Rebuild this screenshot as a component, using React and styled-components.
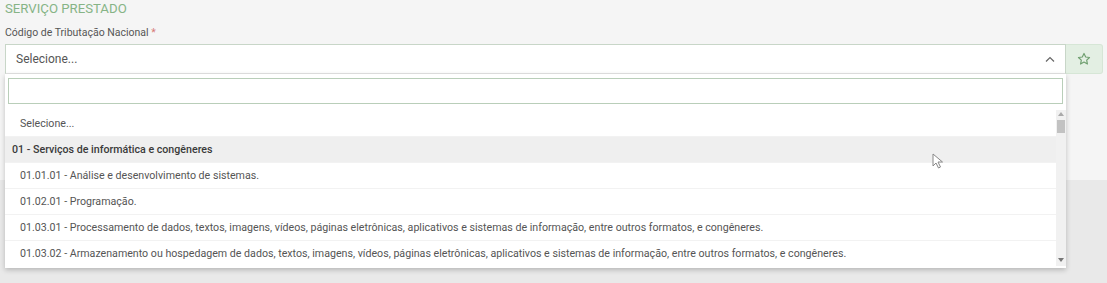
import React from "react"
import styled, { createGlobalStyle } from "styled-components"

const Global = createGlobalStyle`
  html, body {
    margin: 0;
    padding: 0;
    background: #e9e9e9;
    font-family: Roboto, "Liberation Sans", Arial, sans-serif;
  }
`

const Page = styled.div`
  position: relative;
  width: 1107px;
  height: 283px;
  overflow: hidden;
  background: #e9e9e9;
`

const Panel = styled.section`
  background: #f5f5f5;
  height: 180px;
  padding: 1px 4px 0 5px;
  box-sizing: border-box;
`

const Title = styled.h3`
  margin: 0;
  font-size: 13.2px;
  font-weight: 400;
  color: #86b486;
  line-height: 15px;
`

const Label = styled.label`
  display: block;
  margin-top: 10px;
  font-size: 10.5px;
  color: #555;
  line-height: 13px;

  span {
    color: #d77a78;
  }
`

const FieldRow = styled.div`
  display: flex;
  margin-top: 5px;
  position: relative;
`

const SelectBox = styled.div`
  flex: 1;
  height: 30px;
  box-sizing: border-box;
  background: #fff;
  border: 1px solid #c8d6c8;
  border-bottom-color: #e4e4e4;
  display: flex;
  align-items: center;
  justify-content: space-between;
  padding: 0 10px 0 10px;
  font-size: 12px;
  color: #555;
`

const StarButton = styled.button`
  width: 37px;
  height: 30px;
  border: 1px solid #d6e6d6;
  border-left: none;
  border-radius: 0 3px 3px 0;
  background: #e3efe3;
  display: flex;
  align-items: center;
  justify-content: center;
  padding: 0;
`

const Dropdown = styled.div`
  position: absolute;
  left: 0;
  top: 30px;
  width: 1061px;
  background: #fff;
  box-shadow: 0 2px 5px rgba(0, 0, 0, 0.22);
  padding: 4px 3px 2px 3px;
  box-sizing: border-box;
  z-index: 2;
`

const Search = styled.input`
  display: block;
  width: 100%;
  height: 26px;
  box-sizing: border-box;
  border: 1px solid #b9ceb9;
  outline: none;
  background: #fff;
`

const ListWrap = styled.div`
  display: flex;
  margin-top: 6px;
  margin-right: -3px;
  margin-left: -3px;
  height: 156px;
`

const List = styled.ul`
  flex: 1;
  margin: 0;
  padding: 0;
  list-style: none;
  overflow: hidden;
`

const Option = styled.li`
  height: 26px;
  display: flex;
  align-items: center;
  padding-left: ${p => (p.$group ? "7px" : "15px")};
  font-size: 10.65px;
  font-weight: ${p => (p.$group ? 500 : 400)};
  color: ${p => (p.$group ? "#3a3a3a" : "#555")};
  background: ${p => (p.$group ? "#efefef" : "#fff")};
  border-top: 1px solid ${p => (p.$plain ? "transparent" : "#f2f2f2")};
  box-sizing: border-box;
  white-space: nowrap;
`

const Scrollbar = styled.div`
  width: 10px;
  background: #f1f1f1;
  display: flex;
  flex-direction: column;
  align-items: center;
  justify-content: space-between;
  padding: 2px 0 4px;
  box-sizing: border-box;
  position: relative;
`

const Thumb = styled.div`
  position: absolute;
  top: 10px;
  left: 1px;
  width: 8px;
  height: 13px;
  background: #c2c2c2;
`

const Arrow = styled.div`
  width: 0;
  height: 0;
  border-left: 3px solid transparent;
  border-right: 3px solid transparent;
  ${p =>
    p.$down
      ? "border-top: 4px solid #777;"
      : "border-bottom: 4px solid #aaa;"}
`

const Cursor = styled.svg`
  position: absolute;
  left: 932px;
  top: 153px;
  z-index: 3;
`

const options = [
  { text: "Selecione...", plain: true },
  { text: "01 - Serviços de informática e congêneres", group: true },
  { text: "01.01.01 - Análise e desenvolvimento de sistemas." },
  { text: "01.02.01 - Programação." },
  { text: "01.03.01 - Processamento de dados, textos, imagens, vídeos, páginas eletrônicas, aplicativos e sistemas de informação, entre outros formatos, e congêneres." },
  { text: "01.03.02 - Armazenamento ou hospedagem de dados, textos, imagens, vídeos, páginas eletrônicas, aplicativos e sistemas de informação, entre outros formatos, e congêneres." },
]

export default function App() {
  return (
    <Page>
      <Global />
      <Panel>
        <Title>SERVIÇO PRESTADO</Title>
        <Label>Código de Tributação Nacional <span>*</span></Label>
        <FieldRow>
          <SelectBox>
            Selecione...
            <svg width="10" height="6" viewBox="0 0 10 6">
              <path d="M1 5.5 L5 1.5 L9 5.5" fill="none" stroke="#666" strokeWidth="1.2" />
            </svg>
          </SelectBox>
          <StarButton>
            <svg width="14" height="14" viewBox="0 0 24 24" fill="none" stroke="#6f9f6f" strokeWidth="2" strokeLinejoin="round">
              <path d="M12 2.5l2.9 6.1 6.6.8-4.9 4.6 1.3 6.6L12 17.3 6.1 20.6l1.3-6.6-4.9-4.6 6.6-.8z" />
            </svg>
          </StarButton>
          <Dropdown>
            <Search />
            <ListWrap>
              <List>
                {options.map((o, i) => (
                  <Option key={i} $group={o.group} $plain={o.plain}>{o.text}</Option>
                ))}
              </List>
              <Scrollbar>
                <Arrow />
                <Thumb />
                <Arrow $down />
              </Scrollbar>
            </ListWrap>
          </Dropdown>
        </FieldRow>
      </Panel>
      <Cursor width="12" height="16" viewBox="0 0 12 16">
        <path d="M1 1 L1 13 L4 10 L6.5 15 L8.5 14 L6 9 L10.5 9 Z" fill="#fff" stroke="#888" strokeWidth="1" />
      </Cursor>
    </Page>
  )
}
